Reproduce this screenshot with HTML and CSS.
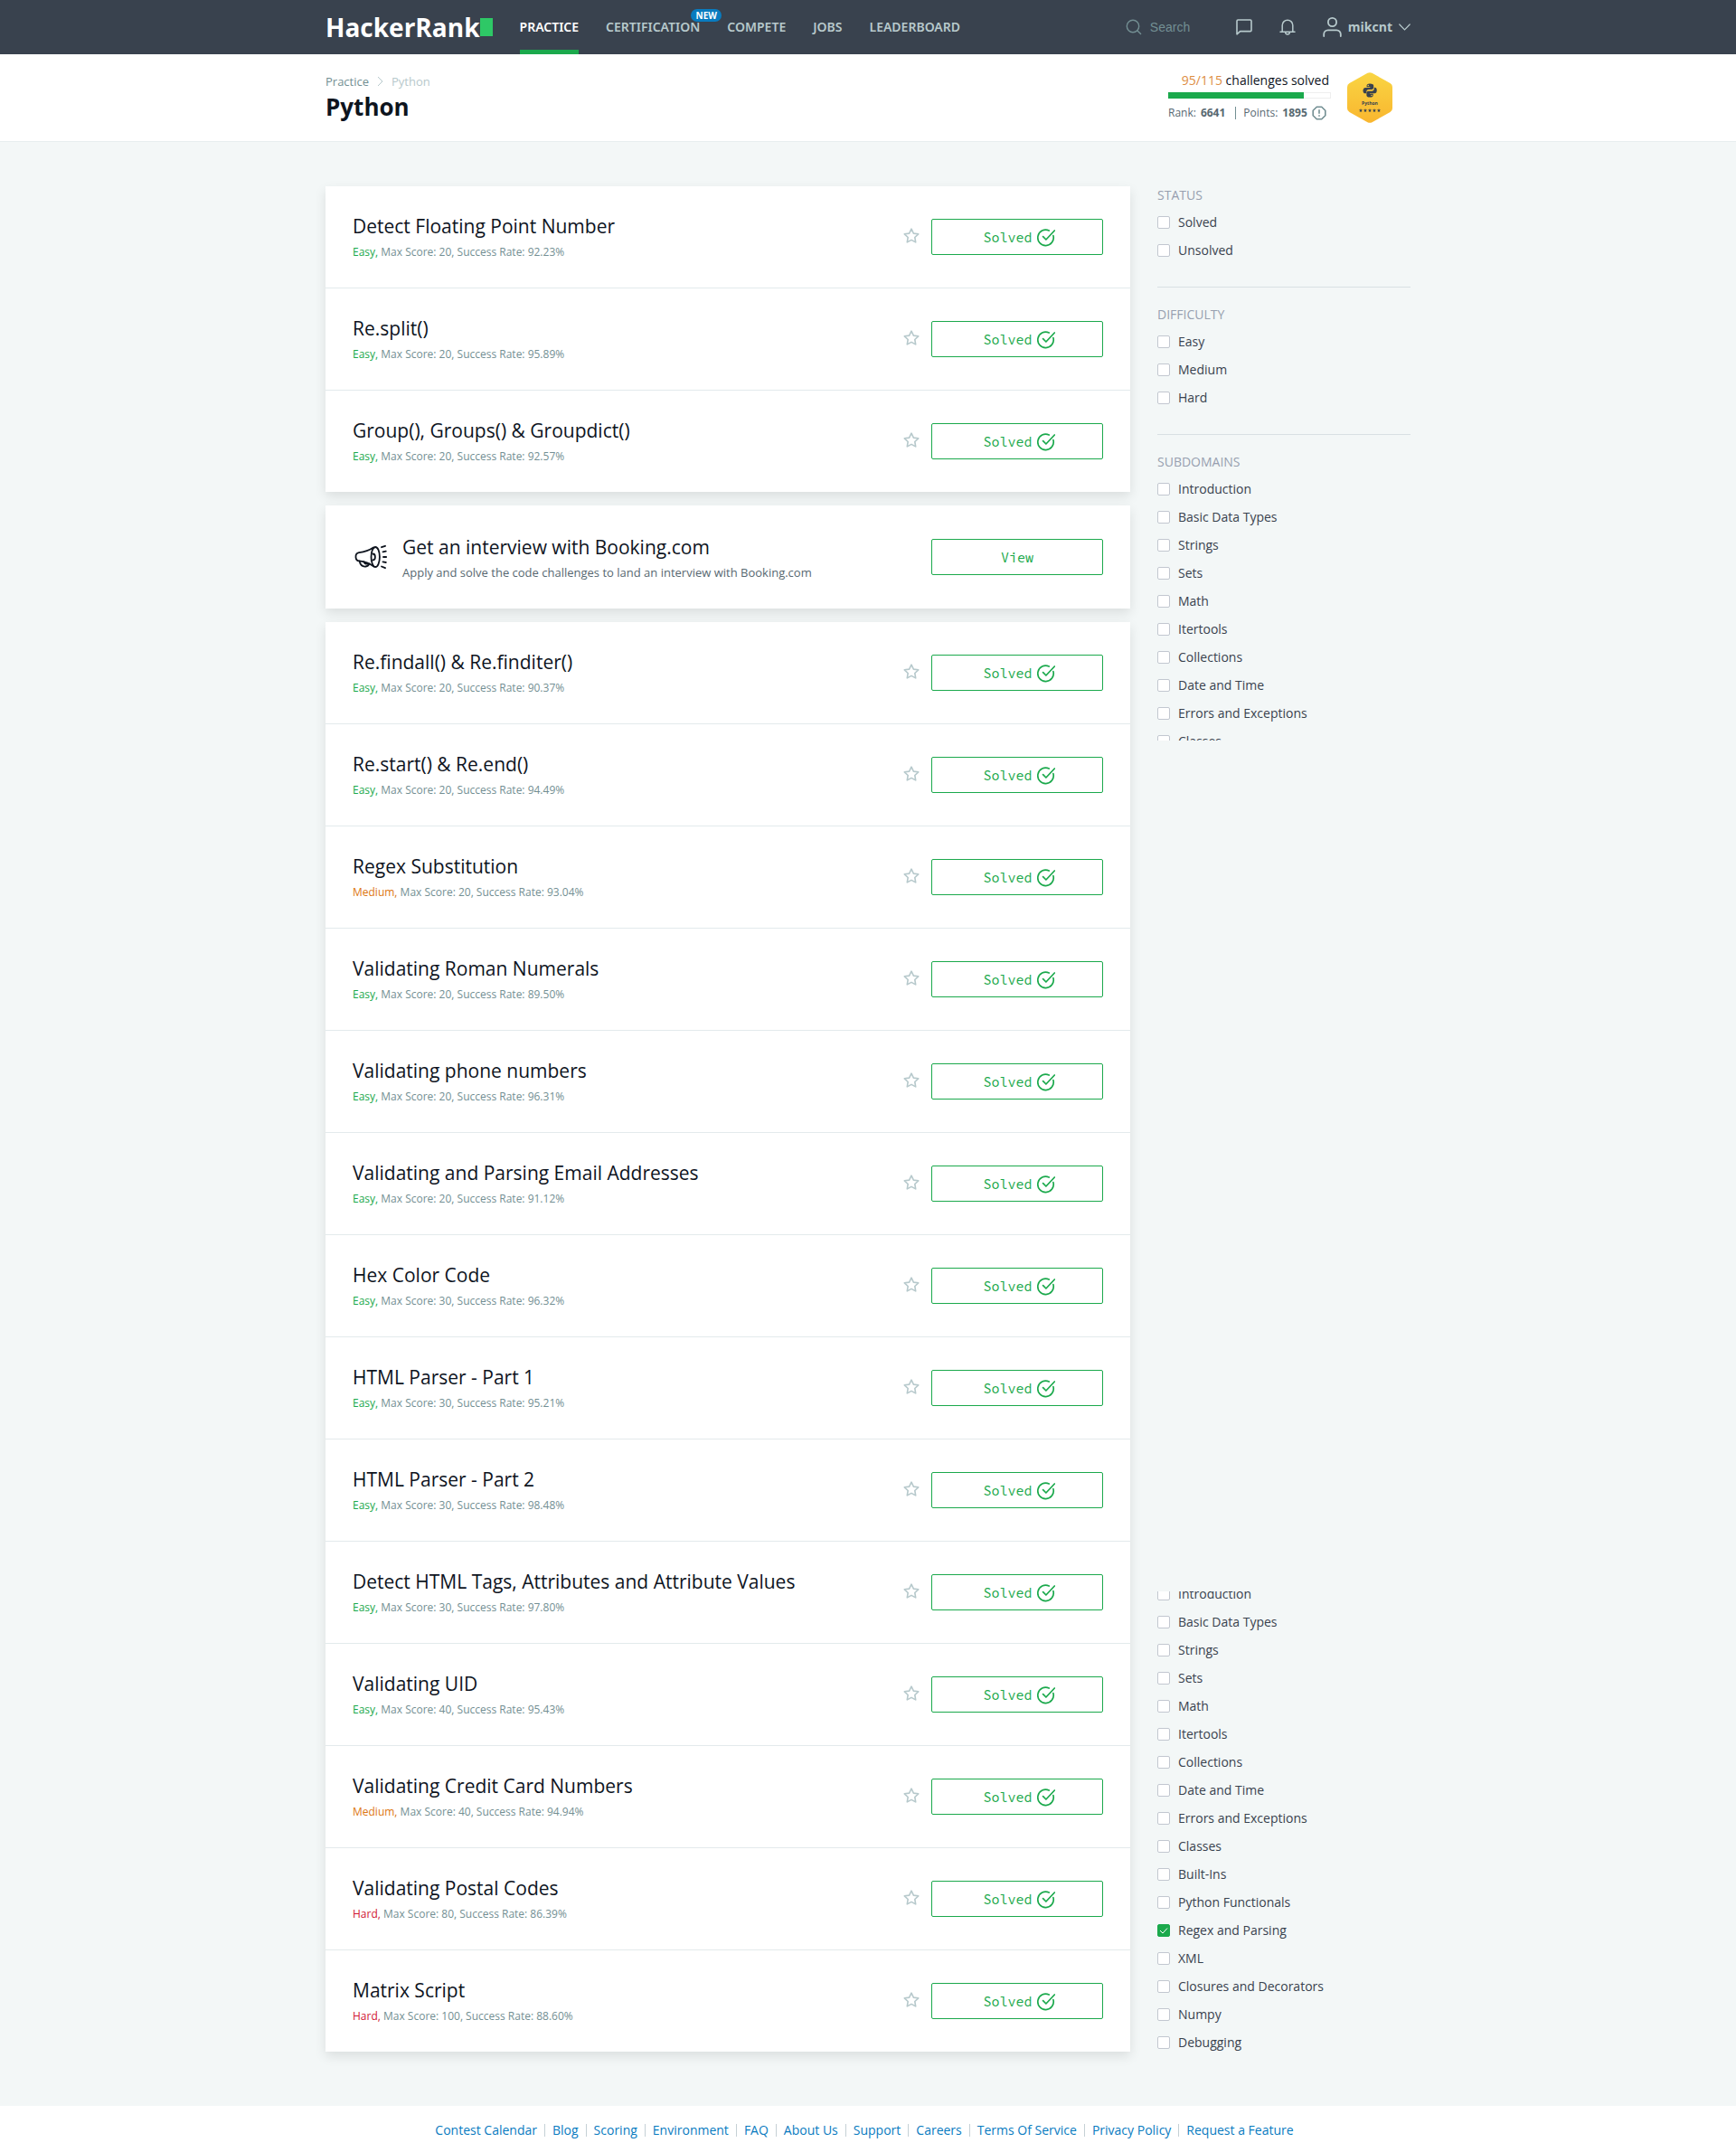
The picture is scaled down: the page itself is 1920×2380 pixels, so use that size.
FILE: index.html
```html
<!DOCTYPE html>
<html lang="en">
<head>
<meta charset="utf-8">
<meta name="viewport" content="width=device-width, initial-scale=1">
<title>Solve Python | HackerRank</title>
<link rel="stylesheet" href="styles.css">
</head>
<body>
<svg class="sprite" aria-hidden="true">
  <symbol id="star" viewBox="0 0 18 18"><path d="M9 1.2l2.4 4.9 5.3.7-3.9 3.7.9 5.4L9 13.4l-4.7 2.5.9-5.4L1.3 6.8l5.3-.7z" fill="none" stroke="currentColor" stroke-width="1.6" stroke-linejoin="round"/></symbol>
  <symbol id="check" viewBox="0 0 20 20"><path d="M17.9 7.6A8.7 8.7 0 1 1 13.2 2M6.6 8.7l3.3 3.3L19.3 2" fill="none" stroke="currentColor" stroke-width="1.7" stroke-linecap="round" stroke-linejoin="round"/></symbol>
</svg>

<header class="topbar">
  <div class="container topbar-inner">
    <a class="logo" href="#">HackerRank<span class="logo-block"></span></a>
    <nav class="nav">
      <a class="nav-link active" href="#">PRACTICE</a>
      <a class="nav-link" href="#">CERTIFICATION<span class="new-badge">NEW</span></a>
      <a class="nav-link" href="#">COMPETE</a>
      <a class="nav-link" href="#">JOBS</a>
      <a class="nav-link" href="#">LEADERBOARD</a>
    </nav>
    <div class="tools">
      <label class="search">
        <svg width="18" height="18" viewBox="0 0 18 18" fill="none" stroke="currentColor" stroke-width="1.4" stroke-linecap="round"><circle cx="8" cy="8" r="6.7"/><path d="M13 13l3.6 3.6"/></svg>
        <input type="text" placeholder="Search" aria-label="Search">
      </label>
      <button class="icon-button" aria-label="Messages"><svg width="18" height="18" viewBox="0 0 18 18" fill="none" stroke="currentColor" stroke-width="1.6" stroke-linejoin="round"><path d="M1 16.8V2.2Q1 1 2.2 1h13.6Q17 1 17 2.2v10.2q0 1.2-1.2 1.2H4.6z"/></svg></button>
      <button class="icon-button" aria-label="Notifications"><svg width="18" height="18" viewBox="0 0 18 18" fill="none" stroke="currentColor" stroke-width="1.5" stroke-linecap="round" stroke-linejoin="round"><path d="M1 14.3h16M3.2 14.2V7a5.8 5.8 0 0 1 11.6 0v7.2M6.6 14.6a2.4 2.4 0 0 0 4.8 0"/></svg></button>
      <button class="user">
        <svg width="21" height="22" viewBox="0 0 21 22" fill="none" stroke="currentColor" stroke-width="1.8" stroke-linecap="round"><circle cx="10.5" cy="5.5" r="4.6"/><path d="M1.2 21v-2.2a4.5 4.5 0 0 1 4.5-4.5h9.6a4.5 4.5 0 0 1 4.5 4.5V21"/></svg>
        <span>mikcnt</span>
        <svg class="chevron" width="13" height="8" viewBox="0 0 13 8" fill="none" stroke="currentColor" stroke-width="1.2" stroke-linecap="round"><path d="M.8 1l5.7 5.8L12.2 1"/></svg>
      </button>
    </div>
  </div>
</header>

<section class="page-head">
  <div class="container page-head-inner">
    <div>
      <div class="crumbs"><a href="#">Practice</a><svg width="7" height="12" viewBox="0 0 7 12" fill="none" stroke="currentColor" stroke-width="1"><path d="M1 1l5 5-5 5"/></svg><span>Python</span></div>
      <h1>Python</h1>
    </div>
    <div class="progress">
      <div class="stats">
        <p class="solved-count"><em>95/115</em> challenges solved</p>
        <div class="bar"><div class="bar-fill" style="width: 84%"></div></div>
        <div class="rank"><span>Rank:</span><b>6641</b><i></i><span>Points:</span><b class="points">1895</b><svg width="16" height="16" viewBox="0 0 16 16" fill="none" stroke="#738f93" stroke-width="1.6"><path d="M5.3 1.2h5.4l4.1 4.1v5.4l-4.1 4.1H5.300l-4.100-4.100V5.300z"/><path d="M8 4.200v4.600M8 10.200v1.600"/></svg></div>
      </div>
      <svg class="badge" width="50" height="56" viewBox="0 0 50 56" role="img" aria-label="Python, five stars">
        <defs><linearGradient id="gold" x1="0" y1="0" x2="0" y2="1"><stop offset="0" stop-color="#f9d543"/><stop offset="1" stop-color="#f9b62f"/></linearGradient></defs>
        <path d="M22.5.8q2.500-1.200 5 0l20 11.300Q50 13.600 50 16.300v23.400q0 2.700-2.500 4.200l-20 11.300q-2.500 1.200-5 0l-20-11.300Q0 42.400 0 39.700V16.300q0-2.700 2.500-4.200z" fill="url(#gold)"/>
        <g transform="translate(17.500 12.500) scale(.625)" fill="#39424e">
          <path d="M12 0C8 0 6.500 1.600 6.500 3.700V6h6v1H4C1.500 7 0 9 0 12.200s1.400 5 3.600 5H6v-3c0-2.200 1.800-4 4-4h5.400c1.900 0 3.300-1.500 3.300-3.300V3.700C18.700 1.500 17 0 12 0zM9.200 2.100a1.200 1.200 0 1 1 0 2.400 1.200 1.200 0 0 1 0-2.400z"/>
          <path d="M12.400 24c4 0 5.500-1.600 5.500-3.700V18h-6v-1h8.500c2.500 0 4-2 4-5.200s-1.400-5-3.600-5h-1.200v2.400c0 2.200-1.800 3.900-4 3.900H9.500c-1.900 0-3.300 1.500-3.300 3.300v3.900C6.200 22.500 7.900 24 12.400 24zm2.800-2.100a1.200 1.200 0 1 1 0-2.400 1.200 1.200 0 0 1 0 2.400z"/>
        </g>
        <text x="25" y="36" text-anchor="middle" class="badge-text">Python</text>
        <path id="s" fill="#39424e" d="M15 40l.6 1.400 1.500.1-1.200 1 .4 1.500-1.300-.8-1.300.8.4-1.500-1.200-1 1.500-.1z"/>
        <use href="#s" x="5"/><use href="#s" x="10"/><use href="#s" x="15"/><use href="#s" x="20"/>
      </svg>
    </div>
  </div>
</section>

<main class="container content">
  <div class="list">
    <div class="card">
      <article class="row"><div class="info"><h2>Detect Floating Point Number</h2><p><span class="easy">Easy,</span> Max Score: 20, Success Rate: 92.23%</p></div><button class="star" aria-label="Bookmark"><svg><use href="#star"/></svg></button><button class="action">Solved<svg><use href="#check"/></svg></button></article>
      <article class="row"><div class="info"><h2>Re.split()</h2><p><span class="easy">Easy,</span> Max Score: 20, Success Rate: 95.89%</p></div><button class="star" aria-label="Bookmark"><svg><use href="#star"/></svg></button><button class="action">Solved<svg><use href="#check"/></svg></button></article>
      <article class="row"><div class="info"><h2>Group(), Groups() &amp; Groupdict()</h2><p><span class="easy">Easy,</span> Max Score: 20, Success Rate: 92.57%</p></div><button class="star" aria-label="Bookmark"><svg><use href="#star"/></svg></button><button class="action">Solved<svg><use href="#check"/></svg></button></article>
    </div>
    <div class="card">
      <article class="row promo">
        <svg class="horn" width="36" height="28" viewBox="0 -1 36 28" fill="none" stroke="#0e141e" stroke-width="1.8" stroke-linecap="round" stroke-linejoin="round"><path d="M21 2.500C16 6 11 7.500 5 8.200c-2.500.4-3.700 2.700-3.500 5.200.2 2.300 1.500 3.800 3.700 4C11 18 16 19.500 21.500 23.500"/><ellipse cx="23.200" cy="13" rx="4.700" ry="11"/><path d="M20.300 9.500c3.500 0 3.500 7 0 7M5.500 17.500c1 4 3.500 6.500 7 6 2.500-.3 3.500-1.500 4-3.200M10.500 18.300c.8 2 2.300 2.700 4.500 2.200M30 2.200L34 .8M31.500 7.300l3.300-.6M32 13h3.200M31.500 18.300l3.300.7M30 23.500l4 1.700"/></svg>
        <div class="info"><h2>Get an interview with Booking.com</h2><p>Apply and solve the code challenges to land an interview with Booking.com</p></div><button class="action">View</button>
      </article>
    </div>
    <div class="card">
      <article class="row"><div class="info"><h2>Re.findall() &amp; Re.finditer()</h2><p><span class="easy">Easy,</span> Max Score: 20, Success Rate: 90.37%</p></div><button class="star" aria-label="Bookmark"><svg><use href="#star"/></svg></button><button class="action">Solved<svg><use href="#check"/></svg></button></article>
      <article class="row"><div class="info"><h2>Re.start() &amp; Re.end()</h2><p><span class="easy">Easy,</span> Max Score: 20, Success Rate: 94.49%</p></div><button class="star" aria-label="Bookmark"><svg><use href="#star"/></svg></button><button class="action">Solved<svg><use href="#check"/></svg></button></article>
      <article class="row"><div class="info"><h2>Regex Substitution</h2><p><span class="medium">Medium,</span> Max Score: 20, Success Rate: 93.04%</p></div><button class="star" aria-label="Bookmark"><svg><use href="#star"/></svg></button><button class="action">Solved<svg><use href="#check"/></svg></button></article>
      <article class="row"><div class="info"><h2>Validating Roman Numerals</h2><p><span class="easy">Easy,</span> Max Score: 20, Success Rate: 89.50%</p></div><button class="star" aria-label="Bookmark"><svg><use href="#star"/></svg></button><button class="action">Solved<svg><use href="#check"/></svg></button></article>
      <article class="row"><div class="info"><h2>Validating phone numbers</h2><p><span class="easy">Easy,</span> Max Score: 20, Success Rate: 96.31%</p></div><button class="star" aria-label="Bookmark"><svg><use href="#star"/></svg></button><button class="action">Solved<svg><use href="#check"/></svg></button></article>
      <article class="row"><div class="info"><h2>Validating and Parsing Email Addresses</h2><p><span class="easy">Easy,</span> Max Score: 20, Success Rate: 91.12%</p></div><button class="star" aria-label="Bookmark"><svg><use href="#star"/></svg></button><button class="action">Solved<svg><use href="#check"/></svg></button></article>
      <article class="row"><div class="info"><h2>Hex Color Code</h2><p><span class="easy">Easy,</span> Max Score: 30, Success Rate: 96.32%</p></div><button class="star" aria-label="Bookmark"><svg><use href="#star"/></svg></button><button class="action">Solved<svg><use href="#check"/></svg></button></article>
      <article class="row"><div class="info"><h2>HTML Parser - Part 1</h2><p><span class="easy">Easy,</span> Max Score: 30, Success Rate: 95.21%</p></div><button class="star" aria-label="Bookmark"><svg><use href="#star"/></svg></button><button class="action">Solved<svg><use href="#check"/></svg></button></article>
      <article class="row"><div class="info"><h2>HTML Parser - Part 2</h2><p><span class="easy">Easy,</span> Max Score: 30, Success Rate: 98.48%</p></div><button class="star" aria-label="Bookmark"><svg><use href="#star"/></svg></button><button class="action">Solved<svg><use href="#check"/></svg></button></article>
      <article class="row"><div class="info"><h2>Detect HTML Tags, Attributes and Attribute Values</h2><p><span class="easy">Easy,</span> Max Score: 30, Success Rate: 97.80%</p></div><button class="star" aria-label="Bookmark"><svg><use href="#star"/></svg></button><button class="action">Solved<svg><use href="#check"/></svg></button></article>
      <article class="row"><div class="info"><h2>Validating UID</h2><p><span class="easy">Easy,</span> Max Score: 40, Success Rate: 95.43%</p></div><button class="star" aria-label="Bookmark"><svg><use href="#star"/></svg></button><button class="action">Solved<svg><use href="#check"/></svg></button></article>
      <article class="row"><div class="info"><h2>Validating Credit Card Numbers</h2><p><span class="medium">Medium,</span> Max Score: 40, Success Rate: 94.94%</p></div><button class="star" aria-label="Bookmark"><svg><use href="#star"/></svg></button><button class="action">Solved<svg><use href="#check"/></svg></button></article>
      <article class="row"><div class="info"><h2>Validating Postal Codes</h2><p><span class="hard">Hard,</span> Max Score: 80, Success Rate: 86.39%</p></div><button class="star" aria-label="Bookmark"><svg><use href="#star"/></svg></button><button class="action">Solved<svg><use href="#check"/></svg></button></article>
      <article class="row"><div class="info"><h2>Matrix Script</h2><p><span class="hard">Hard,</span> Max Score: 100, Success Rate: 88.60%</p></div><button class="star" aria-label="Bookmark"><svg><use href="#star"/></svg></button><button class="action">Solved<svg><use href="#check"/></svg></button></article>
    </div>
  </div>

  <aside class="sidebar">
    <div class="filters filters-top">
      <section class="group">
        <h3>STATUS</h3>
        <label class="option"><input type="checkbox">Solved</label>
        <label class="option"><input type="checkbox">Unsolved</label>
      </section>
      <section class="group">
        <h3>DIFFICULTY</h3>
        <label class="option"><input type="checkbox">Easy</label>
        <label class="option"><input type="checkbox">Medium</label>
        <label class="option"><input type="checkbox">Hard</label>
      </section>
      <section class="group">
        <h3>SUBDOMAINS</h3>
        <label class="option"><input type="checkbox">Introduction</label>
        <label class="option"><input type="checkbox">Basic Data Types</label>
        <label class="option"><input type="checkbox">Strings</label>
        <label class="option"><input type="checkbox">Sets</label>
        <label class="option"><input type="checkbox">Math</label>
        <label class="option"><input type="checkbox">Itertools</label>
        <label class="option"><input type="checkbox">Collections</label>
        <label class="option"><input type="checkbox">Date and Time</label>
        <label class="option"><input type="checkbox">Errors and Exceptions</label>
        <label class="option"><input type="checkbox">Classes</label>
      </section>
    </div>
    <div class="filters filters-bottom">
      <label class="option"><input type="checkbox">Introduction</label>
      <label class="option"><input type="checkbox">Basic Data Types</label>
      <label class="option"><input type="checkbox">Strings</label>
      <label class="option"><input type="checkbox">Sets</label>
      <label class="option"><input type="checkbox">Math</label>
      <label class="option"><input type="checkbox">Itertools</label>
      <label class="option"><input type="checkbox">Collections</label>
      <label class="option"><input type="checkbox">Date and Time</label>
      <label class="option"><input type="checkbox">Errors and Exceptions</label>
      <label class="option"><input type="checkbox">Classes</label>
      <label class="option"><input type="checkbox">Built-Ins</label>
      <label class="option"><input type="checkbox">Python Functionals</label>
      <label class="option"><input type="checkbox" checked>Regex and Parsing</label>
      <label class="option"><input type="checkbox">XML</label>
      <label class="option"><input type="checkbox">Closures and Decorators</label>
      <label class="option"><input type="checkbox">Numpy</label>
      <label class="option"><input type="checkbox">Debugging</label>
    </div>
  </aside>
</main>

<footer class="footer">
  <ul class="footer-links">
    <li><a href="#">Contest Calendar</a></li>
    <li><a href="#">Blog</a></li>
    <li><a href="#">Scoring</a></li>
    <li><a href="#">Environment</a></li>
    <li><a href="#">FAQ</a></li>
    <li><a href="#">About Us</a></li>
    <li><a href="#">Support</a></li>
    <li><a href="#">Careers</a></li>
    <li><a href="#">Terms Of Service</a></li>
    <li><a href="#">Privacy Policy</a></li>
    <li><a href="#">Request a Feature</a></li>
  </ul>
</footer>
</body>
</html>
```
FILE: styles.css
```css
* { box-sizing: border-box; }
body {
  margin: 0;
  background: #f3f7f7;
  color: #0e141e;
  font-family: "Open Sans", "Noto Sans", sans-serif;
  font-size: 14px;
  line-height: 20px;
}
h1, h2, h3, p, ul { margin: 0; padding: 0; font-weight: 400; }
a { color: inherit; text-decoration: none; }
button {
  border: 0;
  padding: 0;
  background: none;
  color: inherit;
  font: inherit;
  cursor: pointer;
}
svg { display: block; flex: none; }
.sprite { position: absolute; width: 0; height: 0; }
.container { max-width: 1200px; margin: 0 auto; }

/* Top bar */
.topbar { background: #39424e; color: #b7c9cc; }
.topbar-inner { display: flex; align-items: center; height: 60px; }
.logo {
  display: flex;
  align-items: center;
  margin-right: 30px;
  color: #fff;
  font-size: 28px;
  font-weight: 700;
}
.logo-block { width: 14px; height: 20px; background: #2ec866; }
.nav { display: flex; gap: 30px; height: 60px; font-family: "Noto Sans", "Open Sans", sans-serif; font-weight: 600; }
.nav-link { position: relative; line-height: 60px; }
.nav-link.active { color: #fff; box-shadow: inset 0 -5px #1ba94c; }
.new-badge {
  position: absolute;
  top: 10px;
  right: -24px;
  width: 34px;
  border-radius: 7px;
  background: #097bbf;
  color: #fff;
  font-size: 10px;
  font-weight: 700;
  line-height: 14px;
  text-align: center;
}
.tools { display: flex; align-items: center; margin-left: auto; }
.search { display: flex; align-items: center; gap: 9px; margin-right: 25px; color: #738f93; }
.search input {
  width: 70px;
  padding: 0;
  border: 0;
  outline: 0;
  background: none;
  color: #fff;
  font: 14px/20px "Liberation Sans", sans-serif;
}
.search input::placeholder { color: #738f93; opacity: 1; }
.icon-button { margin-right: 30px; }
.user { display: flex; align-items: center; gap: 7px; font-weight: 700; }

/* Page heading */
.page-head { background: #fff; border-bottom: 1px solid #e7eeef; }
.page-head-inner { display: flex; justify-content: space-between; height: 96px; padding: 20px 0; }
.crumbs { display: flex; align-items: center; gap: 9px; color: #b7c9cc; font-size: 13px; }
.crumbs a { color: #738f93; }
h1 { font-size: 26px; font-weight: 700; line-height: 36px; }
.progress { display: flex; gap: 18px; margin-right: 20px; }
.stats { width: 180px; }
.solved-count { padding: 0 2px 4px 0; line-height: 18px; text-align: right; }
.solved-count em { color: #dd8d43; font-style: normal; }
.bar { height: 7px; border: 1px solid #eee; background: #fff; }
.bar-fill { height: 7px; margin: -1px; background: #1ba94c; }
.rank { display: flex; align-items: center; padding-top: 6px; color: #576871; font-size: 12px; }
.rank b { margin-left: 5px; }
.rank i { width: 1px; height: 14px; margin: 0 8px 0 11px; background: #738f93; }
.rank svg { margin-left: 5px; }
.badge-text { fill: #39424e; font-size: 5px; font-weight: 700; }

/* Challenge list */
.content { display: grid; grid-template-columns: minmax(0, 1fr) 280px; gap: 30px; padding: 49px 0 60px; }
.list { display: flex; flex-direction: column; gap: 15px; }
.card { background: #fff; box-shadow: 0 5px 12px rgba(0, 0, 0, 0.1); }
.row { display: flex; align-items: center; min-height: 113px; padding: 0 30px; border-bottom: 1px solid #e3eaec; }
.row:last-child { min-height: 112px; border-bottom: 0; }
.row.promo { min-height: 114px; }
.info { display: flex; flex: 1; flex-direction: column; gap: 7px; padding-top: 1px; }
h2 { font-size: 21px; line-height: 26px; }
.info p { color: #738f93; font-size: 12px; line-height: 18px; }
.info .easy { color: #1ba94c; }
.info .medium { color: #dd7711; }
.info .hard { color: #d11534; }
.promo .info { gap: 6px; }
.promo .info p { color: #576871; font-size: 13px; }
.horn { margin: 0 17px 0 2px; }
.star { margin-right: 13px; padding-bottom: 2px; color: #b7c9cc; }
.star svg { width: 18px; height: 18px; }
.action {
  display: flex;
  align-items: center;
  justify-content: center;
  gap: 5px;
  width: 190px;
  height: 40px;
  padding-top: 2px;
  border: 1px solid #1ba94c;
  border-radius: 2px;
  background: #fff;
  color: #1ba94c;
  font: 15px/20px "Source Code Pro", "Noto Sans Mono", "Liberation Mono", monospace;
}
.action svg { width: 20px; height: 20px; margin-right: -4px; }

/* Filters */
.sidebar { display: flex; flex-direction: column; justify-content: space-between; }
.filters { overflow: hidden; }
.filters-top { height: 613px; }
.filters-bottom {
  display: flex;
  flex-direction: column;
  justify-content: flex-end;
  height: 514px;
  margin-bottom: -5px;
}
.group + .group { margin-top: 25px; padding-top: 20px; border-top: 1px solid #d8e0e3; }
h3 { margin-bottom: 4px; color: #979faf; font-size: 14px; }
.option { display: flex; flex: none; align-items: center; gap: 9px; height: 31px; color: #39424e; }
.option input {
  appearance: none;
  width: 14px;
  height: 14px;
  margin: 0;
  border: 1px solid #c2c7d0;
  border-radius: 2px;
  background: #fff;
}
.option input:checked {
  border-color: #1ba94c;
  background: #1ba94c url("data:image/svg+xml,%3Csvg xmlns='http://www.w3.org/2000/svg' viewBox='0 0 12 12'%3E%3Cpath d='M2 6l3 3 5-5.500' fill='none' stroke='white'/%3E%3C/svg%3E") center / 12px no-repeat;
}

/* Footer */
.footer { padding: 17px 0 14px; background: #fff; }
.footer-links { display: flex; flex-wrap: wrap; justify-content: center; list-style: none; color: #097bbf; }
.footer-links li { display: flex; align-items: center; padding-right: 8px; }
.footer-links li:not(:last-child)::after { content: ""; width: 1px; height: 14px; margin-left: 8px; background: #c5d0d5; }
```
